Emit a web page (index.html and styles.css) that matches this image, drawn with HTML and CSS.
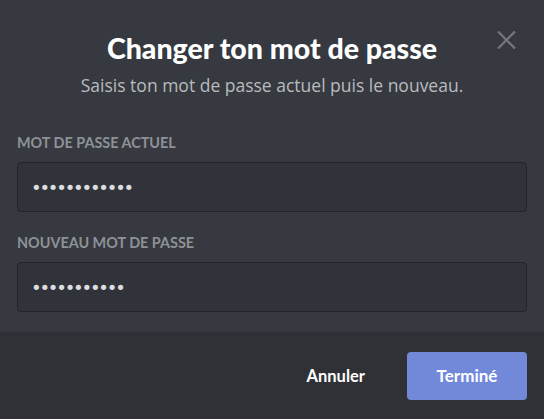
FILE: index.html
```html
<!DOCTYPE html>
<html lang="fr">
<head>
<meta charset="utf-8">
<title>Changer ton mot de passe</title>
<link rel="stylesheet" href="styles.css">
</head>
<body>
<div class="modal">
  <div class="header">
    <h1 class="title">Changer ton mot de passe</h1>
    <p class="subtitle">Saisis ton mot de passe actuel puis le nouveau.</p>
    <button class="close" aria-label="Fermer">
      <svg width="19" height="18" viewBox="0 0 19 18"><path d="M1 0.5L18 17.5M18 0.5L1 17.5" stroke="#74777e" stroke-width="2.2" stroke-linecap="butt"/></svg>
    </button>
  </div>
  <div class="form">
    <div class="field">
      <label class="label">Mot de passe actuel</label>
      <div class="input"><span class="dots">••••••••••••</span></div>
    </div>
    <div class="field">
      <label class="label">Nouveau mot de passe</label>
      <div class="input"><span class="dots">•••••••••••</span></div>
    </div>
  </div>
  <div class="footer">
    <button class="btn-link">Annuler</button>
    <button class="btn-primary">Terminé</button>
  </div>
</div>
</body>
</html>
```

FILE: styles.css
```css
* { box-sizing: border-box; }
html, body { margin: 0; padding: 0; }
body {
  width: 544px;
  height: 419px;
  background: #36393f;
  font-family: Lato, "Open Sans", sans-serif;
  overflow: hidden;
}
.modal {
  position: relative;
  width: 544px;
  height: 419px;
  display: flex;
  flex-direction: column;
  background: #36393f;
}
.header {
  padding-top: 30px;
  text-align: center;
}
.title {
  margin: 0;
  color: #ffffff;
  font-size: 28.5px;
  line-height: 36px;
  font-weight: 900;
  letter-spacing: 0;
}
.subtitle {
  margin: 8px 0 0;
  color: #b9bbbe;
  font-family: "Open Sans", Lato, sans-serif;
  font-size: 17.5px;
  line-height: 22px;
}
.close {
  position: absolute;
  top: 31px;
  right: 28px;
  width: 19px;
  height: 18px;
  padding: 0;
  border: 0;
  background: none;
  display: flex;
}
.form {
  padding: 0 17px;
  margin-top: 38px;
  display: flex;
  flex-direction: column;
  gap: 22px;
  flex: 1;
}
.field {
  display: flex;
  flex-direction: column;
  gap: 11px;
}
.label {
  color: #8e9297;
  font-size: 14.4px;
  line-height: 17px;
  font-weight: 700;
  text-transform: uppercase;
}
.input {
  height: 50px;
  background: #303339;
  border: 1px solid #222427;
  border-radius: 4px;
  display: flex;
  align-items: center;
  padding-left: 13px;
}
.dots {
  color: #dcddde;
  font-size: 18px;
  letter-spacing: -2.2px;
  font-family: "DejaVu Sans", sans-serif;
}
.footer {
  height: 87px;
  background: #2f3136;
  display: flex;
  align-items: center;
  justify-content: flex-end;
  padding: 0 17px;
  gap: 18px;
}
.btn-link, .btn-primary {
  font-family: Lato, "Open Sans", sans-serif;
  font-size: 17px;
  font-weight: 700;
  color: #ffffff;
  border: 0;
  cursor: pointer;
}
.btn-link {
  background: none;
  font-size: 16.5px;
  padding: 0 24px;
  height: 47px;
}
.btn-primary {
  background: #7289da;
  width: 120px;
  height: 48px;
  border-radius: 4px;
}
```
